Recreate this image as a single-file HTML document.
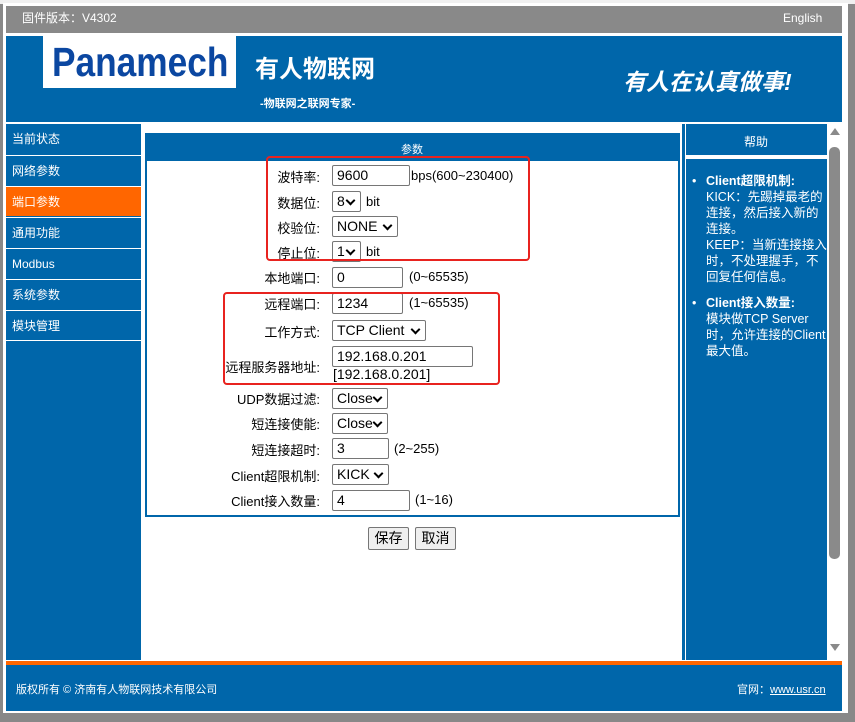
<!DOCTYPE html>
<html><head><meta charset="utf-8"><style>
*{margin:0;padding:0;box-sizing:border-box}
body{width:855px;height:722px;background:#888;position:relative;overflow:hidden;font-family:"Liberation Sans","Noto Sans CJK SC",sans-serif;font-size:13px;color:#000}
.a{position:absolute}
.w{color:#fff}
.nav{position:absolute;left:6px;width:135px;height:30px;background:#0066aa;color:#fff;font-size:12px;line-height:30px;padding-left:6px}
.lbl{position:absolute;right:535px;font-size:13px;line-height:16px;text-align:right;white-space:nowrap;margin-top:3px}
.in{position:absolute;left:332px;height:21px;border:1px solid #767676;border-radius:2px;background:#fff;font-size:14px;line-height:19px;padding-left:4px;white-space:nowrap}
.sel:after{content:"";position:absolute;right:6px;top:5px;width:5px;height:5px;border-right:2px solid #000;border-bottom:2px solid #000;transform:rotate(45deg)}
.t{position:absolute;font-size:13px;line-height:16px;white-space:nowrap;margin-top:1px}
.red{position:absolute;border:2px solid #e8231f;border-radius:4px}
.btn{position:absolute;top:527px;height:23px;border:1px solid #767676;border-radius:2px;background:#efefef;font-size:14px;line-height:21px;text-align:center}
</style></head><body>
<div class="a" style="left:0;top:0;width:855px;height:4px;background:#f0f0f0"></div>
<div class="a" style="left:3px;top:3px;width:845px;height:710px;background:#fff"></div>
<div class="a" style="left:6px;top:6px;width:836px;height:27px;background:#898989"></div>
<div class="a w" style="left:22px;top:10px;font-size:12px;line-height:16px">固件版本：V4302</div>
<div class="a w" style="left:783px;top:10px;font-size:12px;line-height:16px">English</div>
<div class="a" style="left:6px;top:36px;width:836px;height:86px;background:#0066aa"></div>
<div class="a" style="left:43px;top:36px;width:193px;height:52px;background:#fff"></div>
<div class="a" style="left:52px;top:38px;font-size:41px;line-height:48px;font-weight:bold;color:#0b47a1;transform:scaleX(0.86);transform-origin:left">Panamech</div>
<div class="a w" style="left:255px;top:55px;font-size:24px;line-height:30px;font-weight:bold">有人物联网</div>
<div class="a w" style="left:260px;top:95px;font-size:11px;font-weight:bold">-物联网之联网专家-</div>
<div class="a w" style="left:623px;top:63px;font-size:23px;font-weight:bold;font-style:italic">有人在认真做事!</div>
<div class="a" style="left:6px;top:124px;width:135px;height:536px;background:#0066aa"></div>
<div class="nav" style="top:124px">当前状态</div>
<div class="nav" style="top:155px;border-top:1px solid #fff">网络参数</div>
<div class="nav" style="top:186px;background:#ff6600;border-top:1px solid #fff">端口参数</div>
<div class="nav" style="top:217px;border-top:1px solid #fff">通用功能</div>
<div class="nav" style="top:248px;border-top:1px solid #fff">Modbus</div>
<div class="nav" style="top:279px;border-top:1px solid #fff">系统参数</div>
<div class="nav" style="top:310px;border-top:1px solid #fff">模块管理</div>
<div class="a" style="left:6px;top:340px;width:135px;height:1px;background:#fff"></div>
<div class="a" style="left:682px;top:124px;width:3px;height:536px;background:#0066aa"></div>
<div class="a" style="left:145px;top:133px;width:535px;height:384px;border:2px solid #0066aa"></div>
<div class="a" style="left:145px;top:133px;width:535px;height:28px;background:#0066aa"></div>
<div class="a w" style="left:401px;top:141px;font-size:11px">参数</div>
<div class="lbl" style="top:167px">波特率:</div><div class="in" style="top:165px;width:78px">9600</div><div class="t" style="left:411px;top:167px">bps(600~230400)</div>
<div class="lbl" style="top:193px">数据位:</div><div class="in sel" style="top:191px;width:29px">8</div><div class="t" style="left:366px;top:193px">bit</div>
<div class="lbl" style="top:218px">校验位:</div><div class="in sel" style="top:216px;width:66px">NONE</div>
<div class="lbl" style="top:243px">停止位:</div><div class="in sel" style="top:241px;width:29px">1</div><div class="t" style="left:366px;top:243px">bit</div>
<div class="lbl" style="top:268px">本地端口:</div><div class="in" style="top:267px;width:71px">0</div><div class="t" style="left:409px;top:268px">(0~65535)</div>
<div class="lbl" style="top:294px">远程端口:</div><div class="in" style="top:293px;width:71px">1234</div><div class="t" style="left:409px;top:294px">(1~65535)</div>
<div class="lbl" style="top:322px">工作方式:</div><div class="in sel" style="top:320px;width:94px">TCP Client</div>
<div class="lbl" style="top:357px">远程服务器地址:</div><div class="in" style="top:346px;width:141px">192.168.0.201</div>
<div class="t" style="left:333px;top:365px;font-size:14px">[192.168.0.201]</div>
<div class="lbl" style="top:389px">UDP数据过滤:</div><div class="in sel" style="top:388px;width:56px">Close</div>
<div class="lbl" style="top:414px">短连接使能:</div><div class="in sel" style="top:413px;width:56px">Close</div>
<div class="lbl" style="top:440px">短连接超时:</div><div class="in" style="top:438px;width:57px">3</div><div class="t" style="left:394px;top:440px">(2~255)</div>
<div class="lbl" style="top:466px">Client超限机制:</div><div class="in sel" style="top:464px;width:57px">KICK</div>
<div class="lbl" style="top:491px">Client接入数量:</div><div class="in" style="top:490px;width:78px">4</div><div class="t" style="left:415px;top:491px">(1~16)</div>
<div class="red" style="left:266px;top:156px;width:264px;height:105px"></div>
<div class="red" style="left:223px;top:292px;width:277px;height:93px"></div>
<div class="btn" style="left:368px;width:41px">保存</div>
<div class="btn" style="left:415px;width:41px">取消</div>
<div class="a" style="left:686px;top:124px;width:141px;height:31px;background:#0066aa"></div>
<div class="a w" style="left:744px;top:133px;font-size:12px">帮助</div>
<div class="a" style="left:686px;top:159px;width:141px;height:501px;background:#0066aa"></div>
<div class="a w" style="left:692px;top:173px;font-size:12.5px;line-height:16px;width:136px">
<div style="position:relative;padding-left:14px"><span style="position:absolute;left:0">•</span><b>Client超限机制:</b><br>KICK：先踢掉最老的连接，然后接入新的连接。<br>KEEP：当新连接接入时，不处理握手，不回复任何信息。</div>
<div style="position:relative;padding-left:14px;margin-top:10px"><span style="position:absolute;left:0">•</span><b>Client接入数量:</b><br>模块做TCP Server时，允许连接的Client最大值。</div>
</div>
<div class="a" style="left:829px;top:147px;width:11px;height:412px;background:#8a8a8a;border-radius:5px"></div>
<div class="a" style="left:830px;top:128px;width:0;height:0;border-left:5px solid transparent;border-right:5px solid transparent;border-bottom:7px solid #8a8a8a"></div>
<div class="a" style="left:830px;top:644px;width:0;height:0;border-left:5px solid transparent;border-right:5px solid transparent;border-top:7px solid #8a8a8a"></div>
<div class="a" style="left:6px;top:661px;width:836px;height:4px;background:#ff6600"></div>
<div class="a" style="left:6px;top:665px;width:836px;height:46px;background:#0066aa"></div>
<div class="a w" style="left:16px;top:681px;font-size:11px">版权所有 © 济南有人物联网技术有限公司</div>
<div class="a w" style="left:737px;top:681px;font-size:11px">官网：<span style="text-decoration:underline">www.usr.cn</span></div>
</body></html>
